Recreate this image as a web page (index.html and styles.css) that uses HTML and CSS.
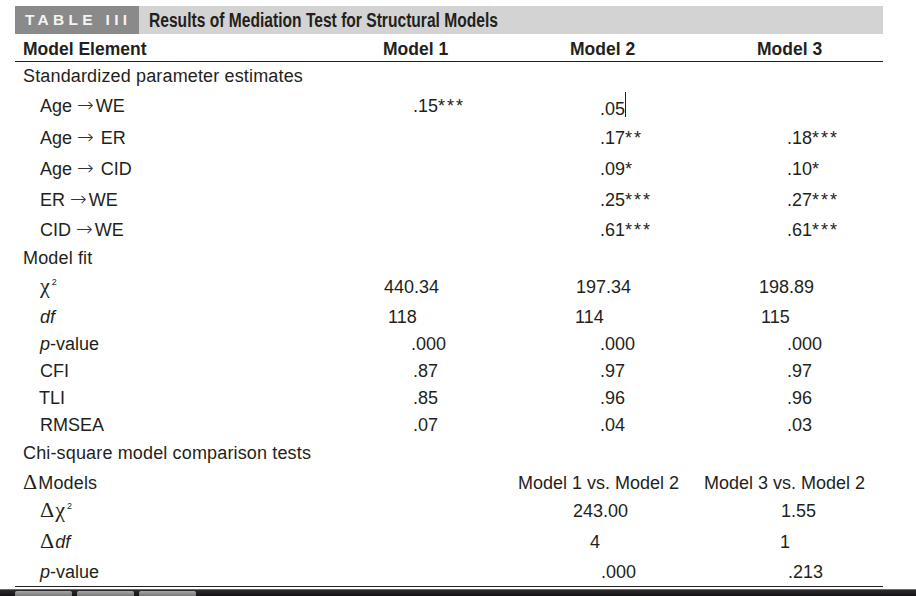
FILE: index.html
```html
<!DOCTYPE html>
<html>
<head>
<meta charset="utf-8">
<title>Table III</title>
<link rel="stylesheet" href="styles.css">
</head>
<body>
<div class="page">
  <div class="titlebar">
    <span class="tag">TABLE III</span>
    <span class="title">Results of Mediation Test for Structural Models</span>
  </div>
  <div class="table">
    <div class="row head">
      <div class="lbl">Model Element</div><div>Model 1</div><div>Model 2</div><div>Model 3</div>
    </div>
    <div class="row h30"><div class="lbl">Standardized parameter estimates</div></div>
    <div class="row h32">
      <div class="sub">Age <span class="arr">→</span>WE</div>
      <div class="x30">.15<span class="ast">***</span></div>
      <div class="x30">.05<span class="caret"></span></div>
      <div></div>
    </div>
    <div class="row h31">
      <div class="sub">Age <span class="arr">→</span> ER</div>
      <div></div>
      <div class="x30">.17<span class="ast">**</span></div>
      <div class="x30">.18<span class="ast">***</span></div>
    </div>
    <div class="row h31">
      <div class="sub">Age <span class="arr">→</span> CID</div>
      <div></div>
      <div class="x30">.09<span class="ast">*</span></div>
      <div class="x30">.10<span class="ast">*</span></div>
    </div>
    <div class="row h30">
      <div class="sub">ER <span class="arr">→</span>WE</div>
      <div></div>
      <div class="x30">.25<span class="ast">***</span></div>
      <div class="x30">.27<span class="ast">***</span></div>
    </div>
    <div class="row h28">
      <div class="sub">CID <span class="arr">→</span>WE</div>
      <div></div>
      <div class="x30">.61<span class="ast">***</span></div>
      <div class="x30">.61<span class="ast">***</span></div>
    </div>
    <div class="row h29"><div class="lbl">Model fit</div></div>
    <div class="row h30">
      <div class="sub"><span class="chi">χ</span><span class="sup">2</span></div>
      <div class="x1">440.34</div>
      <div class="x6">197.34</div>
      <div class="x2">198.89</div>
    </div>
    <div class="row h27">
      <div class="sub"><i>df</i></div>
      <div class="x5">118</div>
      <div class="x5">114</div>
      <div class="x4">115</div>
    </div>
    <div class="row h27">
      <div class="sub"><i>p</i>-value</div>
      <div class="x28">.000</div>
      <div class="x30">.000</div>
      <div class="x30">.000</div>
    </div>
    <div class="row h27">
      <div class="sub">CFI</div>
      <div class="x30">.87</div>
      <div class="x30">.97</div>
      <div class="x30">.97</div>
    </div>
    <div class="row h27">
      <div class="sub tli">TLI</div>
      <div class="x30">.85</div>
      <div class="x30">.96</div>
      <div class="x30">.96</div>
    </div>
    <div class="row h28">
      <div class="sub">RMSEA</div>
      <div class="x30">.07</div>
      <div class="x30">.04</div>
      <div class="x30">.03</div>
    </div>
    <div class="row h30"><div class="lbl">Chi-square model comparison tests</div></div>
    <div class="row h28">
      <div class="lbl"><span class="delta">Δ</span>Models</div>
      <div></div>
      <div class="xm52">Model 1 vs. Model 2</div>
      <div class="xm53">Model 3 vs. Model 2</div>
    </div>
    <div class="row h31">
      <div class="sub"><span class="delta">Δ</span><span class="chi">χ</span><span class="sup">2</span></div>
      <div></div>
      <div class="x3">243.00</div>
      <div class="x24">1.55</div>
    </div>
    <div class="row h30">
      <div class="sub"><span class="delta">Δ</span><i>df</i></div>
      <div></div>
      <div class="x20">4</div>
      <div class="x23">1</div>
    </div>
    <div class="row h28">
      <div class="sub"><i>p</i>-value</div>
      <div></div>
      <div class="x31">.000</div>
      <div class="x31">.213</div>
    </div>
  </div>
  <div class="taskbar">
    <span class="tbtn"></span><span class="tbtn"></span><span class="tbtn"></span>
  </div>
</div>
</body>
</html>
```

FILE: styles.css
```css
html, body {
  margin: 0;
  padding: 0;
  background: #ffffff;
  color: #231f20;
  font-family: "Liberation Sans", Arial, sans-serif;
  height: 596px;
  overflow: hidden;
}

.page {
  padding-top: 6px;
}

.titlebar {
  margin-left: 15px;
  width: 868px;
  height: 28px;
  background: #d3d3d3;
  display: flex;
  align-items: center;
  overflow: hidden;
}

.tag {
  flex: 0 0 124px;
  height: 28px;
  box-sizing: border-box;
  padding-left: 10px;
  background: #8a8a8a;
  color: #f4f4f4;
  font-weight: bold;
  font-size: 15.5px;
  letter-spacing: 4.3px;
  line-height: 28px;
  white-space: nowrap;
  overflow: hidden;
}

.title {
  display: inline-block;
  margin-left: 10px;
  font-weight: bold;
  font-size: 19.5px;
  line-height: 28px;
  white-space: nowrap;
  transform: scaleX(0.80);
  transform-origin: left center;
  color: #231f20;
}

.table {
  margin-left: 15px;
  width: 868px;
  font-size: 18px;
  border-bottom: 1px solid #231f20;
}

.row {
  display: grid;
  grid-template-columns: 368px 187px 187px 126px;
  line-height: 28px;
  white-space: nowrap;
}

.head {
  height: 28px;
  box-sizing: border-box;
  padding-top: 4px;
  line-height: 23px;
  font-weight: bold;
  font-size: 17.5px;
  border-bottom: 1px solid #231f20;
}

.h27 { height: 27px; }
.h28 { height: 28px; }
.h29 { height: 29px; }
.h30 { height: 30px; }
.h31 { height: 31px; }
.h32 { height: 32px; }

.lbl {
  padding-left: 8px;
  letter-spacing: 0.15px;
}

.head .lbl {
  letter-spacing: 0;
}

.sub {
  padding-left: 25px;
}

.sub.tli {
  padding-left: 24px;
}

.arr {
  font-family: "DejaVu Sans", sans-serif;
  font-weight: 200;
  font-size: 20px;
  line-height: 20px;
  margin-right: 2px;
  color: #333;
}

.ast {
  letter-spacing: 2px;
}

.caret {
  display: inline-block;
  width: 1px;
  height: 25px;
  background: #231f20;
  vertical-align: -2px;
}

.chi {
  font-family: "Liberation Serif", "Times New Roman", serif;
  font-size: 22px;
  line-height: 20px;
}

.sup {
  font-size: 9px;
  line-height: 9px;
  vertical-align: 8px;
  margin-left: 2px;
}

.delta {
  font-family: "Liberation Serif", "Times New Roman", serif;
  font-size: 22px;
  line-height: 20px;
  margin-right: 1px;
}

.x1 { padding-left: 1px; }
.x2 { padding-left: 2px; }
.x3 { padding-left: 3px; }
.x4 { padding-left: 4px; }
.x5 { padding-left: 5px; }
.x6 { padding-left: 6px; }
.x20 { padding-left: 20px; }
.x23 { padding-left: 23px; }
.x24 { padding-left: 24px; }
.x28 { padding-left: 28px; }
.x30 { padding-left: 30px; }
.x31 { padding-left: 31px; }
.xm52 { margin-left: -52px; }
.xm53 { margin-left: -53px; }

.taskbar {
  margin-top: 2px;
  height: 7px;
  box-sizing: border-box;
  border-top: 1px solid #6a6a6a;
  background: linear-gradient(#2c2a2e, #141214);
  display: flex;
  gap: 5px;
  padding-left: 15px;
  padding-top: 1px;
}

.tbtn {
  display: block;
  width: 57px;
  height: 6px;
  border-radius: 2px 2px 0 0;
  background: linear-gradient(#a8a8a8, #6c6c6c);
}
```
